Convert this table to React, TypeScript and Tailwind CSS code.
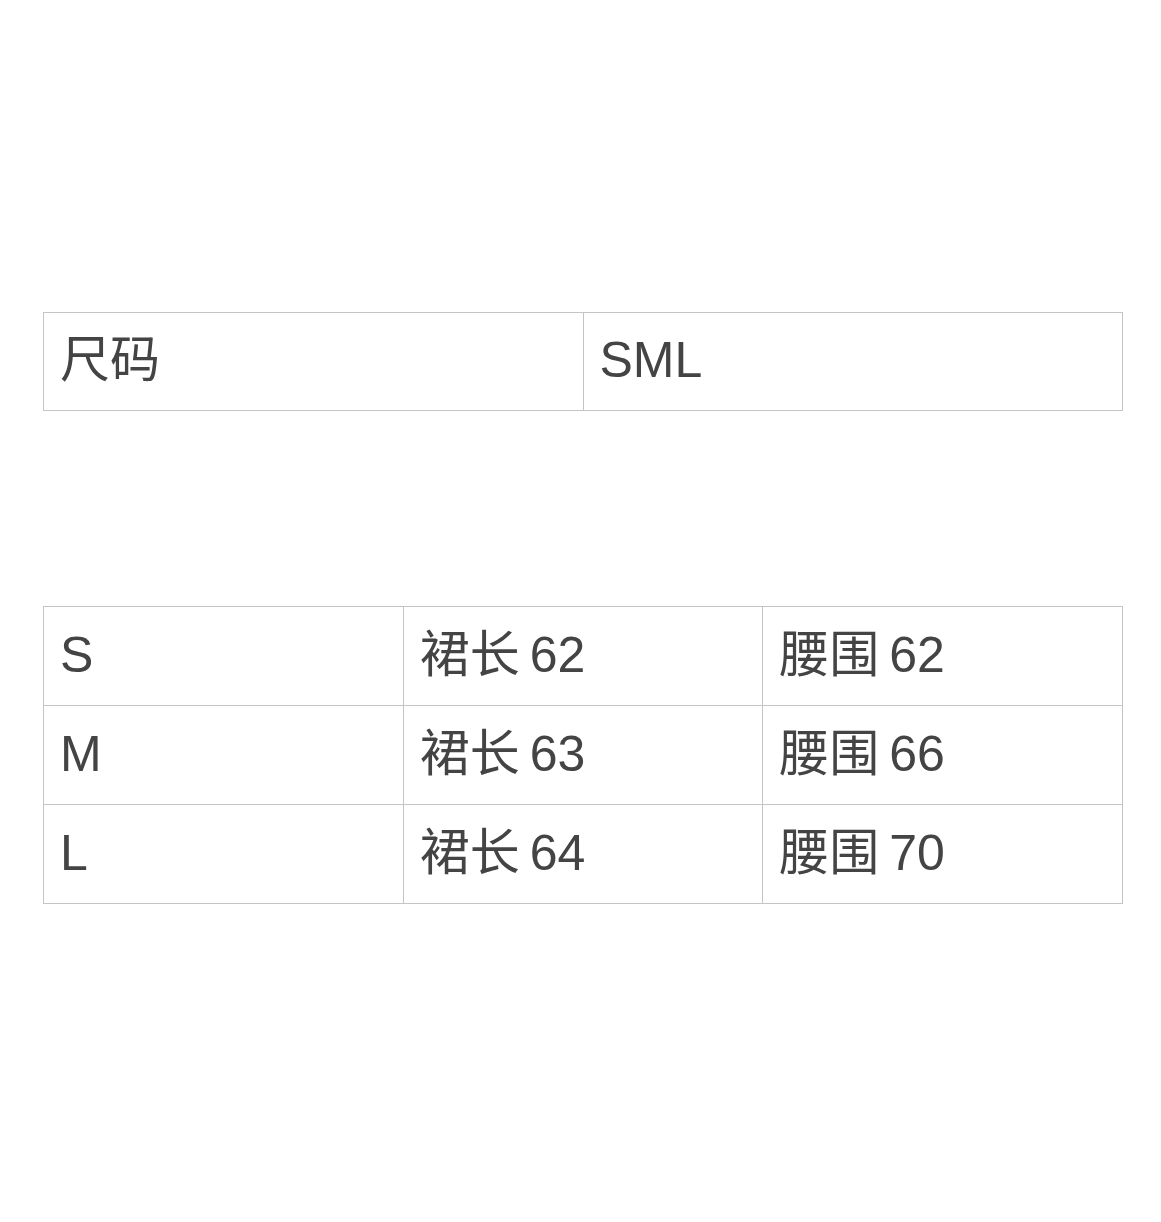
const sizes = [
    { size: "S", length: "62", waist: "62" },
    { size: "M", length: "63", waist: "66" },
    { size: "L", length: "64", waist: "70" },
];

const cell = "border border-[#c4c4c4] pl-4 pr-2 pb-[3px] align-middle leading-none";

export default function App() {
    return (
        <div
            className="min-h-[1222px] bg-white text-[#444444] text-[50px] pt-[312px]"
            style={{ fontFamily: '"Liberation Sans", "Noto Sans CJK SC", sans-serif' }}
        >
            {/* size header */}
            <table className="ml-[43px] w-[1080px] border-collapse table-fixed">
                <tbody>
                    <tr>
                        <td className={`${cell} h-[98px]`}>尺码</td>
                        <td className={`${cell} h-[98px]`}>SML</td>
                    </tr>
                </tbody>
            </table>

            {/* measurements */}
            <table className="ml-[43px] mt-[195px] w-[1080px] border-collapse table-fixed">
                <tbody>
                    {sizes.map((row) => (
                        <tr key={row.size}>
                            <td className={`${cell} h-[99px]`}>{row.size}</td>
                            <td className={`${cell} h-[99px]`}>
                                裙长<span className="ml-[10px]">{row.length}</span>
                            </td>
                            <td className={`${cell} h-[99px]`}>
                                腰围<span className="ml-[10px]">{row.waist}</span>
                            </td>
                        </tr>
                    ))}
                </tbody>
            </table>
        </div>
    );
}
